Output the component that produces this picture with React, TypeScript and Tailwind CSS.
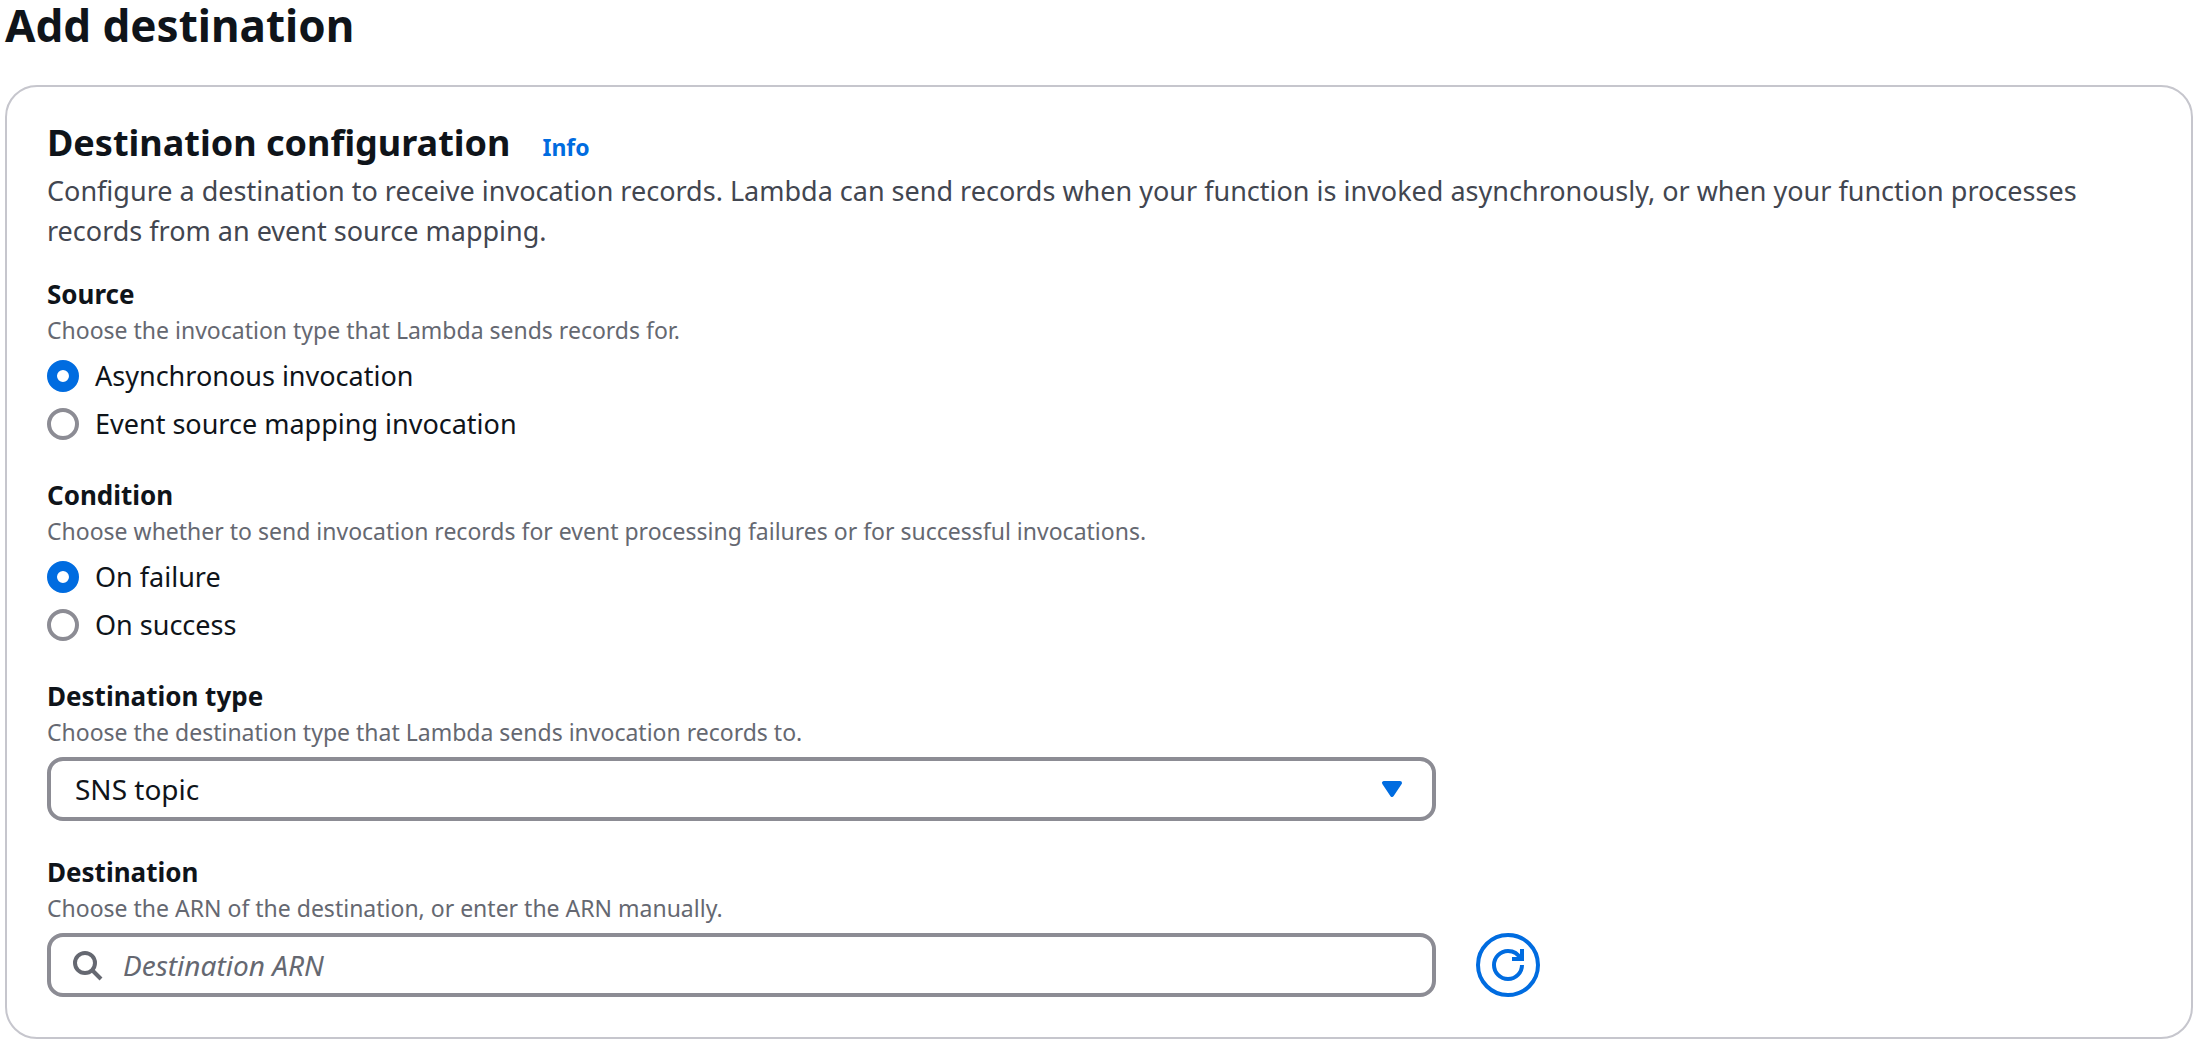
import { useState, type ReactNode } from "react";

type Option = { value: string; label: string };

function Hint({ id, children }: { id: string; children: ReactNode }) {
  return (
    <p id={id} className="text-[23px] leading-8 text-[#656871]">
      {children}
    </p>
  );
}

function RadioGroup({
  name,
  legend,
  hint,
  options,
}: {
  name: string;
  legend: string;
  hint: string;
  options: Option[];
}) {
  const [selected, setSelected] = useState(options[0].value);
  return (
    <fieldset aria-describedby={`${name}-hint`}>
      <legend className="block text-[26px] leading-10 font-bold">{legend}</legend>
      <Hint id={`${name}-hint`}>{hint}</Hint>
      <div className="mt-[10px] flex flex-col gap-2">
        {options.map((option) => (
          <label key={option.value} className="flex items-center gap-4 text-[27px] leading-10">
            <input
              type="radio"
              name={name}
              value={option.value}
              checked={selected === option.value}
              onChange={() => setSelected(option.value)}
              className="size-8 shrink-0 appearance-none rounded-full border-4 border-[#8c8c94] bg-white checked:border-[10px] checked:border-[#006ce0]"
            />
            {option.label}
          </label>
        ))}
      </div>
    </fieldset>
  );
}

function CaretIcon() {
  return (
    <svg
      viewBox="0 0 16 16"
      aria-hidden="true"
      className="pointer-events-none absolute top-4 right-7 size-8 text-[#006ce0]"
    >
      <path
        d="M4 5h8l-4 6-4-6Z"
        fill="currentColor"
        stroke="currentColor"
        strokeWidth="2"
        strokeLinejoin="round"
      />
    </svg>
  );
}

function SearchIcon() {
  return (
    <svg
      viewBox="0 0 16 16"
      aria-hidden="true"
      className="pointer-events-none absolute top-4 left-6 size-8 text-[#656871]"
      fill="none"
      stroke="currentColor"
      strokeWidth="2"
    >
      <circle cx="7" cy="7" r="5" />
      <path d="m15 15-4.5-4.5" />
    </svg>
  );
}

function RefreshIcon() {
  return (
    <svg
      viewBox="0 0 16 16"
      aria-hidden="true"
      className="size-8"
      fill="none"
      stroke="currentColor"
      strokeWidth="2"
    >
      <path d="M15 8c0 3.87-3.13 7-7 7s-7-3.13-7-7 3.13-7 7-7c2.79 0 5.2 1.63 6.33 4" />
      <path d="M10 5h5V0" />
    </svg>
  );
}

const controlClass =
  "block h-16 w-full appearance-none rounded-2xl border-4 border-[#8c8c94] bg-white text-[28px] leading-10";

export default function App() {
  return (
    <main className="bg-white pr-[7px] pb-3 pl-[5px] font-['Noto_Sans',sans-serif] text-[#0f141a]">
      <h1 className="pb-[35px] text-[44px] leading-[50px] font-bold">Add destination</h1>
      <form
        onSubmit={(event) => event.preventDefault()}
        className="rounded-[32px] border-2 border-[#c6c6cd] px-10 pt-[31px] pb-10"
      >
        <header className="mb-[23px]">
          <div className="mb-[3px] flex items-baseline gap-8">
            <h2 className="text-[36px] leading-[50px] font-bold">Destination configuration</h2>
            <a href="#info" className="text-[23px] leading-8 font-bold text-[#006ce0]">
              Info
            </a>
          </div>
          <p className="text-[27px] leading-10 text-[#424650]">
            Configure a destination to receive invocation records. Lambda can send records when your
            function is invoked asynchronously, or when your function processes records from an event
            source mapping.
          </p>
        </header>

        <div className="flex flex-col gap-[31px]">
          <RadioGroup
            name="source"
            legend="Source"
            hint="Choose the invocation type that Lambda sends records for."
            options={[
              { value: "async", label: "Asynchronous invocation" },
              { value: "mapping", label: "Event source mapping invocation" },
            ]}
          />
          <RadioGroup
            name="condition"
            legend="Condition"
            hint="Choose whether to send invocation records for event processing failures or for successful invocations."
            options={[
              { value: "failure", label: "On failure" },
              { value: "success", label: "On success" },
            ]}
          />

          <div className="grid grid-cols-12 gap-x-10">
            <div className="col-span-8">
              <label htmlFor="type" className="block text-[26px] leading-10 font-bold">
                Destination type
              </label>
              <Hint id="type-hint">Choose the destination type that Lambda sends invocation records to.</Hint>
              <div className="relative mt-[9px]">
                <select
                  id="type"
                  aria-describedby="type-hint"
                  defaultValue="sns"
                  className={`${controlClass} px-6`}
                >
                  <option value="sns">SNS topic</option>
                </select>
                <CaretIcon />
              </div>
            </div>
          </div>

          <div className="grid grid-cols-12 items-end gap-x-10">
            <div className="col-span-8">
              <label htmlFor="arn" className="block text-[26px] leading-10 font-bold">
                Destination
              </label>
              <Hint id="arn-hint">Choose the ARN of the destination, or enter the ARN manually.</Hint>
              <div className="relative mt-[9px]">
                <input
                  id="arn"
                  type="text"
                  aria-describedby="arn-hint"
                  placeholder="Destination ARN"
                  className={`${controlClass} pr-6 pl-18 placeholder:text-[#656871] placeholder:italic`}
                />
                <SearchIcon />
              </div>
            </div>
            <button
              type="button"
              aria-label="Refresh destinations"
              className="flex size-16 items-center justify-center rounded-full border-4 border-[#006ce0] text-[#006ce0]"
            >
              <RefreshIcon />
            </button>
          </div>
        </div>
      </form>
    </main>
  );
}
